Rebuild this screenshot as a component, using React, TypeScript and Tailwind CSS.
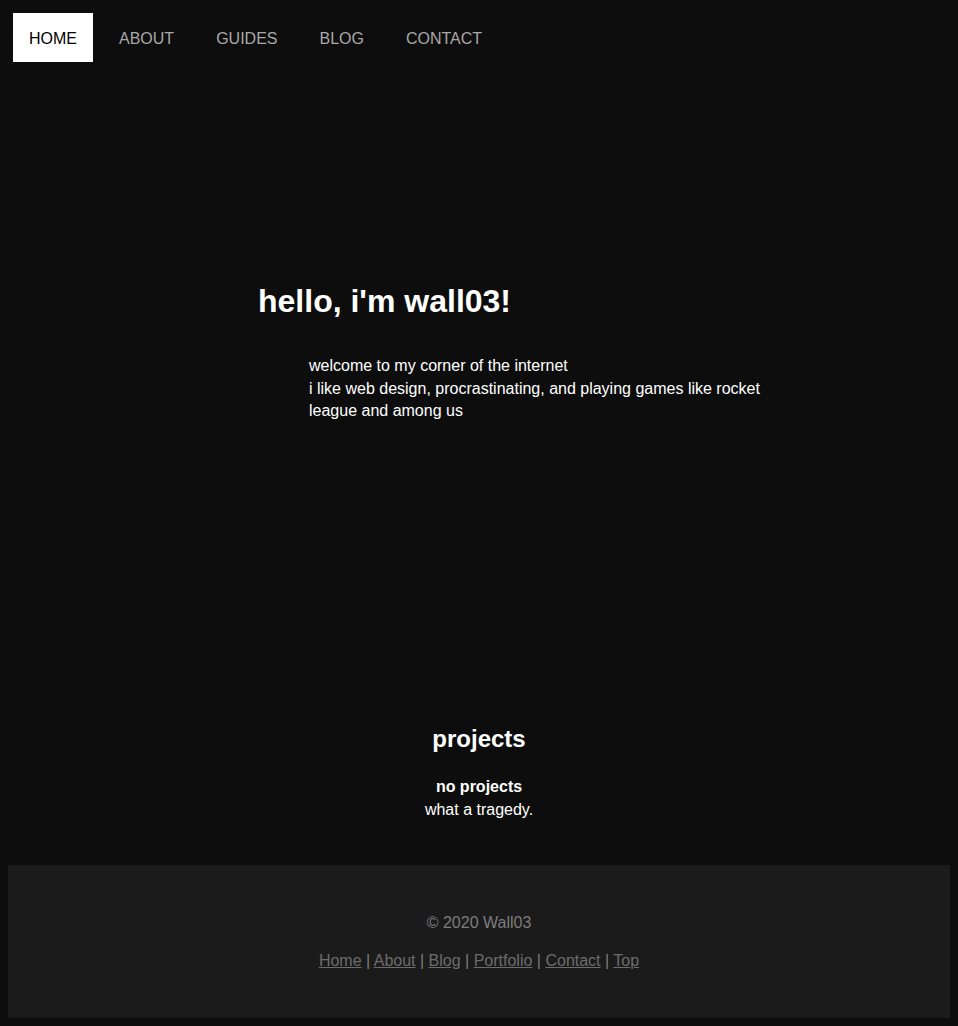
const navItems = ["HOME", "ABOUT", "GUIDES", "BLOG", "CONTACT"]
const footerLinks = ["Home", "About", "Blog", "Portfolio", "Contact", "Top"]

const App = () => {
  return (
    <div className="min-h-screen bg-[#0d0d0d] p-[8px] font-['Liberation_Sans',Arial,sans-serif] text-white">
      <nav className="flex gap-[10px] p-[5px]">
        {navItems.map((item, i) => (
          <a
            key={item}
            href="#"
            className={
              i === 0
                ? "flex h-[49px] items-center bg-white px-4 pt-[2px] text-[16px] text-black"
                : "flex h-[49px] items-center px-4 pt-[2px] text-[16px] text-[#a8a8a8]"
            }
          >
            {item}
          </a>
        ))}
      </nav>

      <section className="ml-[250px] mt-[216px]">
        <h1 className="text-[32px] leading-[37px] font-bold">hello, i'm wall03!</h1>
        <p className="ml-[51px] mt-[35px] w-[480px] text-[16px] leading-[22.6px]">
          welcome to my corner of the internet
          <br />
          i like web design, procrastinating, and playing games like rocket league and among us
        </p>
      </section>

      <section className="mt-[302px] text-center">
        <h2 className="text-[24px] leading-[27.6px] font-bold">projects</h2>
        <p className="mt-[23px] text-[16px] leading-[23px]">
          <b>no projects</b>
          <br />
          what a tragedy.
        </p>
      </section>

      <footer className="mt-[44px] flex flex-col items-center gap-[19px] bg-[#1b1b1b] pt-[49px] pb-[48px] text-[16px] leading-[18.4px] text-[#7d7d7d]">
        <p>© 2020 Wall03</p>
        <p>
          {footerLinks.map((link, i) => (
            <span key={link}>
              <a href="#" className="text-[#6c6c6c] underline">
                {link}
              </a>
              {i < footerLinks.length - 1 && " | "}
            </span>
          ))}
        </p>
      </footer>
    </div>
  )
}

export default App
